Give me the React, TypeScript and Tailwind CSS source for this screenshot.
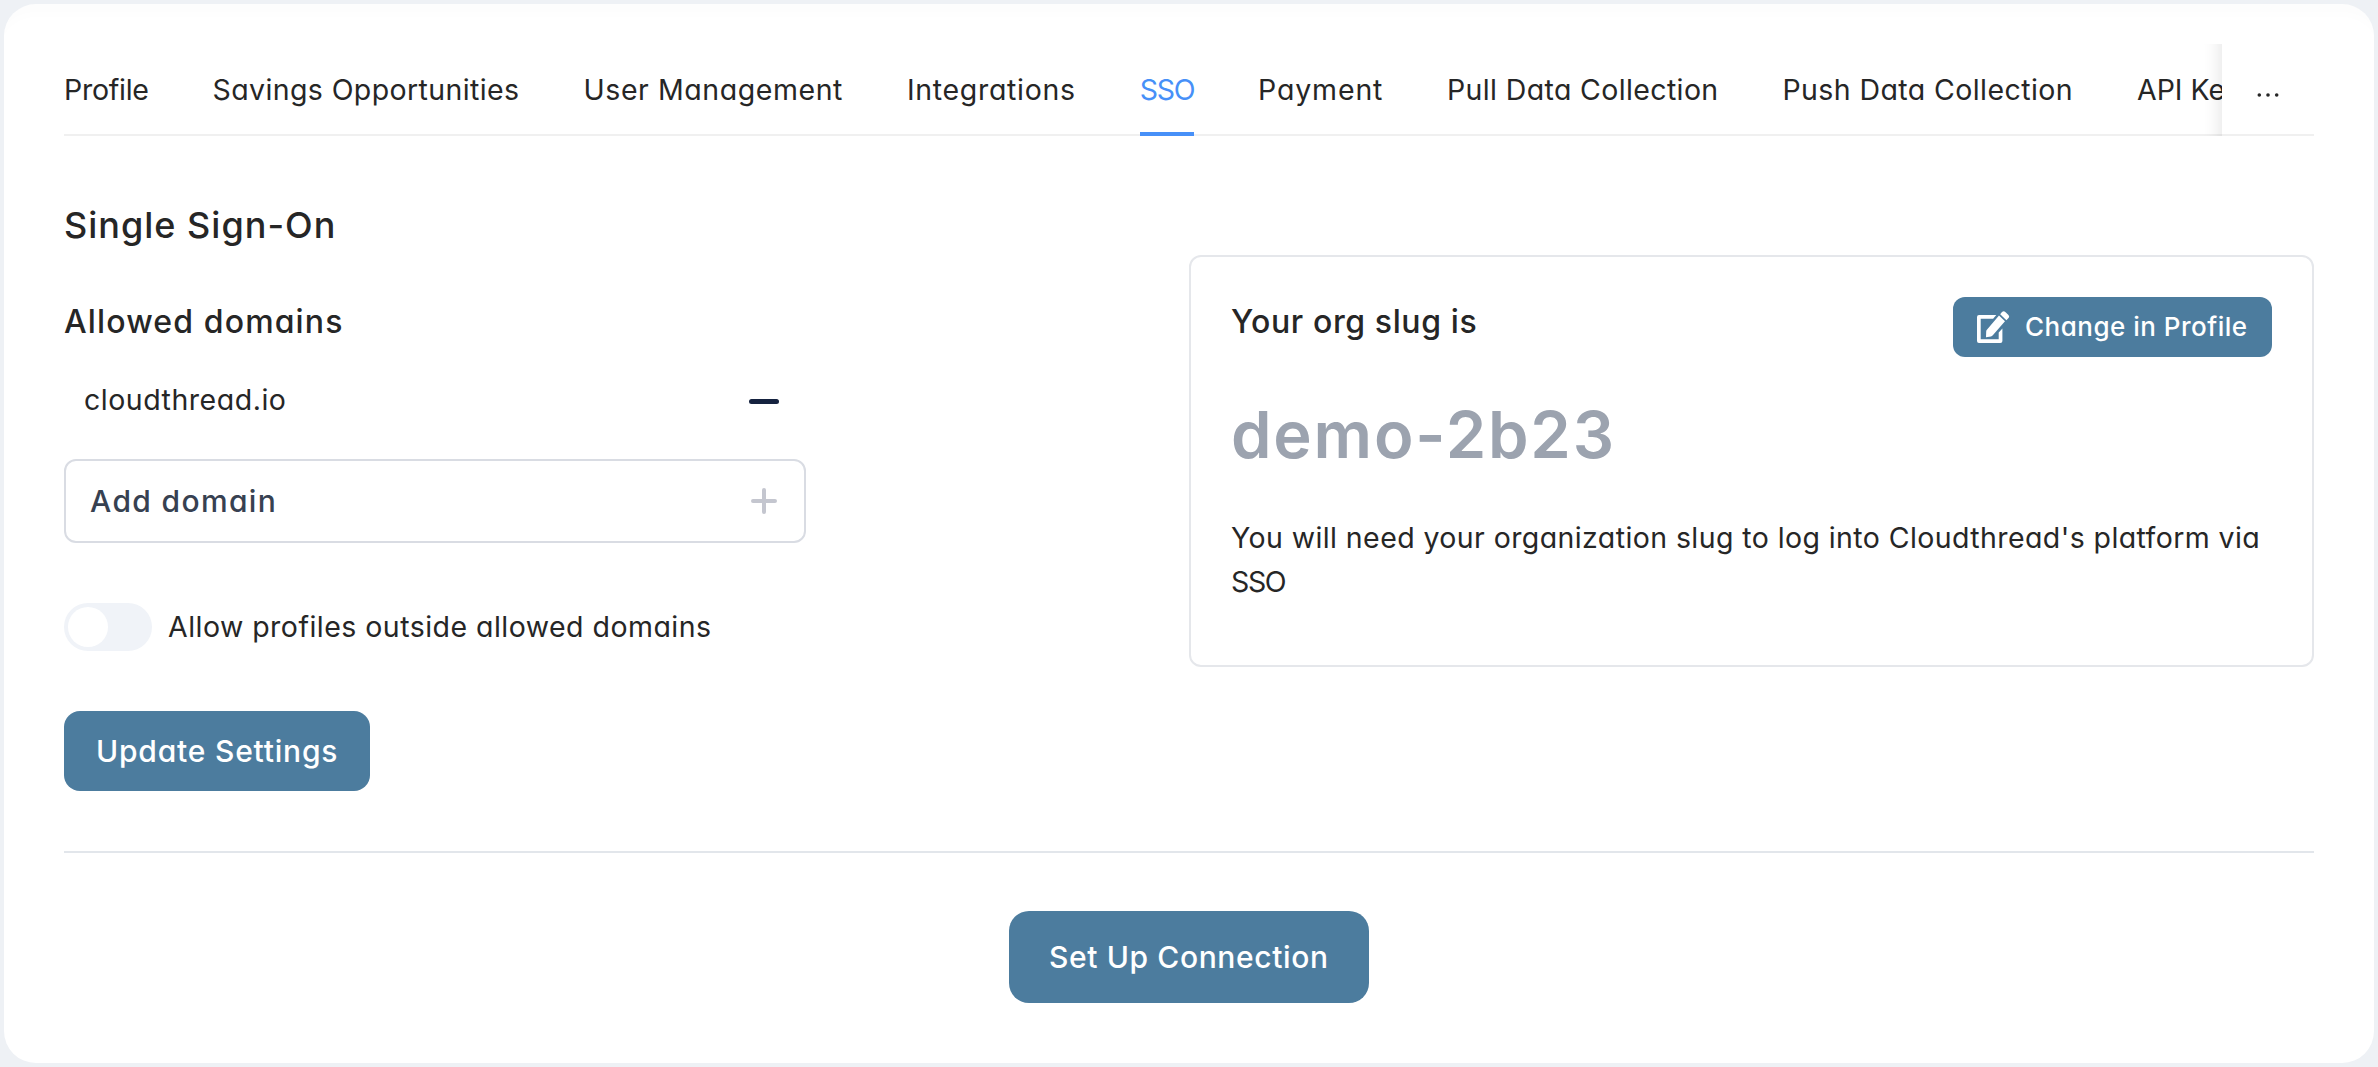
import { useState } from "react";

type Tab = { label: string; className: string };

const tabs: Tab[] = [
  { label: "Profile", className: "w-[84.5px] tracking-[-0.26px]" },
  { label: "Savings Opportunities", className: "w-[307px] tracking-[0.39px]" },
  { label: "User Management", className: "w-[259.5px] tracking-[0.57px]" },
  { label: "Integrations", className: "w-[168.8px] tracking-[0.68px]" },
  { label: "SSO", className: "w-[54.2px] tracking-[-1.35px]" },
  { label: "Payment", className: "w-[125px] tracking-[0.86px]" },
  { label: "Pull Data Collection", className: "w-[271.5px] tracking-[0.37px]" },
  { label: "Push Data Collection", className: "w-[290.5px] tracking-[0.41px]" },
  { label: "API Keys", className: "w-[130px] tracking-normal" },
];

function TabBar() {
  const [active, setActive] = useState("SSO");
  return (
    <nav className="flex h-[92px] text-[28.5px]">
      <div className="w-[2158px] shrink-0 overflow-hidden">
        <div className="flex h-[92px] gap-16 shadow-[inset_0_-2px_0_#f0f0f0]">
          {tabs.map((tab) => (
            <button
              key={tab.label}
              onClick={() => setActive(tab.label)}
              className={`flex h-[92px] shrink-0 items-center border-b-4 pt-1 whitespace-nowrap ${tab.className} ${
                tab.label === active ? "border-[#4790f8] text-[#4790f8]" : "border-transparent"
              }`}
            >
              {tab.label}
            </button>
          ))}
        </div>
      </div>
      <div className="relative flex flex-1 items-center border-b-2 border-[#f0f0f0] pl-[35px]">
        <div className="absolute top-0 -left-10 h-[92px] w-10 shadow-[inset_-20px_0_16px_-16px_rgba(0,0,0,0.09)]" />
        <svg viewBox="0 0 22 4" className="mt-3 h-1 w-[22px] fill-[#262626]">
          <circle cx="2.3" cy="2" r="1.8" />
          <circle cx="11" cy="2" r="1.8" />
          <circle cx="19.7" cy="2" r="1.8" />
        </svg>
      </div>
    </nav>
  );
}

function EditIcon() {
  return (
    <svg viewBox="0 0 33 33" className="h-[33px] w-[33px] fill-white">
      <path d="M2 4h17.3l-3.2 3.8H3.7v20.4h18v-6.6l3.7-4V30a2 2 0 0 1-2 2H2a2 2 0 0 1-2-2V6a2 2 0 0 1 2-2z" />
      <path d="M9 26.2l.2-5.6q0-1 .7-1.8L22 4.5l6 5.8-12.2 14q-.8 1-1.8 1.2z" />
      <path d="M23.2 3.2L25 1.1q1.6-1.6 3.3-.2l2.9 2.8q1.7 1.7.3 3.4L29.4 9.2z" />
    </svg>
  );
}

function DomainSettings() {
  const [allowOutside, setAllowOutside] = useState(false);
  return (
    <section className="w-[742px] pt-[65px]">
      <h1 className="text-[36px] leading-[48px] font-medium tracking-[1px]">Single Sign-On</h1>
      <h2 className="mt-[51px] text-[32px] leading-[44px] font-medium tracking-[1.13px]">
        Allowed domains
      </h2>
      <div className="mt-[34px] flex h-11 items-center justify-between pr-[27px] pl-5">
        <span className="text-[28.5px] leading-[44px] tracking-[0.52px]">cloudthread.io</span>
        <button aria-label="Remove domain" className="mt-0.5 h-[5px] w-[30px] rounded-full bg-[#15223f]" />
      </div>
      <div className="mt-[37px] flex h-[84px] items-center justify-between rounded-xl border-2 border-[#d9dce3] pr-[27px] pl-6">
        <span className="text-[30px] font-medium tracking-[1.35px] text-[#374151]">Add domain</span>
        <svg viewBox="0 0 26 26" className="h-[26px] w-[26px] stroke-[#c4c6cf] stroke-4" strokeLinecap="round">
          <path d="M13 2v22M2 13h22" />
        </svg>
      </div>
      <div className="mt-[60px] flex h-12 items-center">
        <button
          role="switch"
          aria-checked={allowOutside}
          aria-label="Allow profiles outside allowed domains"
          onClick={() => setAllowOutside(!allowOutside)}
          className={`flex h-12 w-[88px] items-center rounded-full px-1 ${
            allowOutside ? "justify-end bg-[#4c7c9e]" : "bg-[#f0f3f8]"
          }`}
        >
          <span className="h-10 w-10 rounded-full bg-white" />
        </button>
        <span className="ml-4 text-[28.5px] leading-[44px] whitespace-nowrap tracking-[0.47px]">
          Allow profiles outside allowed domains
        </span>
      </div>
      <button className="mt-[60px] flex h-20 w-[306px] items-center rounded-2xl bg-[#4c7c9e] pl-8 text-[30px] font-medium tracking-[0.8px] whitespace-nowrap text-white">
        Update Settings
      </button>
    </section>
  );
}

function OrgSlugCard() {
  return (
    <section className="mt-[119px] h-[412px] w-[1125px] rounded-xl border-2 border-[#e5e7eb] pt-10 pr-10 pl-10">
      <div className="flex h-[60px] items-start justify-between">
        <h2 className="mt-[3px] text-[32px] leading-[44px] font-medium tracking-[0.6px]">
          Your org slug is
        </h2>
        <button className="flex h-[60px] w-[319px] items-center rounded-xl bg-[#4c7c9e] pl-6 text-white">
          <EditIcon />
          <span className="ml-[15px] text-[26px] leading-[40px] font-medium tracking-[0.5px] whitespace-nowrap">
            Change in Profile
          </span>
        </button>
      </div>
      <p className="mt-[38px] h-[81px] text-[65px] leading-[80px] font-semibold tracking-[1.8px] text-[#9ca3af]">
        demo-2b23
      </p>
      <p className="mt-10 text-[28.5px] leading-[44px] tracking-[0.41px]">
        You will need your organization slug to log into Cloudthread's platform via
        <br />
        <span className="tracking-[-1.35px]">SSO</span>
      </p>
    </section>
  );
}

export default function App() {
  return (
    <div className="h-[1067px] w-[2378px] overflow-hidden bg-[#eef1f5] p-1 font-['Inter',sans-serif] text-[#262626] [font-feature-settings:'cv11']">
      <main className="h-[1059px] rounded-[32px] bg-white px-[60px] pt-10 shadow-[inset_0_18px_12px_-8px_rgba(0,0,0,0.01)]">
        <TabBar />
        <div className="flex h-[717px] items-start justify-between border-b-2 border-[#e2e6eb]">
          <DomainSettings />
          <OrgSlugCard />
        </div>
        <div className="mt-[58px] flex justify-center">
          <button className="flex h-[92px] w-[360px] items-center rounded-[20px] bg-[#4c7c9e] pl-10 text-[30px] font-medium tracking-[0.62px] whitespace-nowrap text-white">
            Set Up Connection
          </button>
        </div>
      </main>
    </div>
  );
}
